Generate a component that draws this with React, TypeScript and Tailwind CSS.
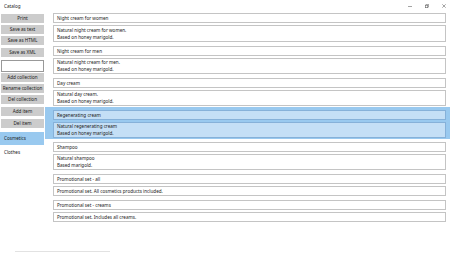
import React from 'react';

type Product = { name: string; desc: string[] };

const products: Product[] = [
  { name: 'Night cream for women', desc: ['Natural night cream for women.', 'Based on honey marigold.'] },
  { name: 'Night cream for men', desc: ['Natural night cream for men.', 'Based on honey marigold.'] },
  { name: 'Day cream', desc: ['Natural day cream.', 'Based on honey marigold.'] },
  { name: 'Regenerating cream', desc: ['Natural regenerating cream', 'Based on honey marigold.'] },
  { name: 'Shampoo', desc: ['Natural shampoo', 'Based marigold.'] },
  { name: 'Promotional set - all', desc: ['Promotional set. All cosmetics products included.'] },
  { name: 'Promotional set - creams', desc: ['Promotional set. Includes all creams.'] },
];

const SELECTED = 3;

function SideButton({ label, className = '' }: { label: string; className?: string }) {
  return (
    <div
      className={
        'flex h-[9px] w-[43px] items-center justify-center whitespace-nowrap bg-[#cccccc] text-[4.6px] leading-none text-[#1a1a1a] ' +
        className
      }
    >
      {label}
    </div>
  );
}

function ProductRow({ p, selected, first }: { p: Product; selected: boolean; first: boolean }) {
  const box = selected
    ? 'border-[#86b1d9] bg-[#c4dff6]'
    : 'border-[#c4c4c4] bg-white';
  const descH = p.desc.length > 1 ? (first ? 'h-[17px] ' : 'h-[16px] ') : 'h-[10px] ';
  return (
    <div
      className={
        'flex flex-col gap-[2px] pb-[1px] pl-[8px] pr-[4px] ' +
        (first ? 'pt-[2px] ' : 'pt-[3px] ') +
        (selected ? 'bg-[#99c9ef]' : '')
      }
    >
      <div className={'flex h-[10px] items-center whitespace-nowrap border pl-[3px] text-[4.6px] leading-none text-[#1a1a1a] ' + box}>
        {p.name}
      </div>
      <div
        className={
          'flex flex-col justify-center whitespace-nowrap border pl-[3px] text-[4.6px] leading-[7px] text-[#1a1a1a] ' +
          descH +
          box
        }
      >
        {p.desc.map((l) => (
          <span key={l}>{l}</span>
        ))}
      </div>
    </div>
  );
}

export default function App() {
  return (
    <div
      className="relative h-[253px] w-[450px] overflow-hidden bg-white"
      style={{ fontFamily: '"Noto Sans", "Liberation Sans", sans-serif' }}
    >
      {/* Title bar */}
      <div className="flex h-[11px] items-center justify-between pl-[4px] pr-[4px] pt-[1px]">
        <span className="text-[4.6px] leading-none text-[#222]">Catalog</span>
        <div className="flex items-center gap-[13px] text-[#555]">
          <svg width="4" height="4" viewBox="0 0 4 4">
            <path d="M0 2.5h4" stroke="#666" strokeWidth="0.6" />
          </svg>
          <svg width="4" height="4" viewBox="0 0 4 4" fill="none" stroke="#666" strokeWidth="0.6">
            <rect x="0.3" y="1.2" width="2.5" height="2.5" />
            <path d="M1.2 1.2V0.3h2.5v2.5H2.8" />
          </svg>
          <svg width="4" height="4" viewBox="0 0 4 4" fill="none" stroke="#666" strokeWidth="0.6">
            <path d="M0.3 0.3l3.4 3.4M3.7 0.3L0.3 3.7" />
          </svg>
        </div>
      </div>

      <div className="flex">
        {/* Left column */}
        <div className="flex w-[45px] flex-col pl-[1px] pt-[3px]">
          <SideButton label="Print" />
          <SideButton label="Save as text" className="mt-[2px]" />
          <SideButton label="Save as HTML" className="mt-[2px]" />
          <SideButton label="Save as XML" className="mt-[3px]" />
          <div className="mt-[3px] h-[12px] w-[43px] border border-[#999] bg-white" />
          <SideButton label="Add collection" className="mt-[1px]" />
          <SideButton label="Rename collection" className="mt-[2px]" />
          <SideButton label="Del collection" className="mt-[2px]" />
          <SideButton label="Add item" className="mt-[3px]" />
          <SideButton label="Del item" className="mt-[3px]" />
          <div className="ml-[-1px] mt-[4px] flex h-[13px] w-[44px] items-center bg-[#99c9ef] pl-[4px] text-[4.6px] leading-none text-[#1a1a1a]">
            Cosmetics
          </div>
          <div className="flex h-[15px] items-center pl-[3px] text-[4.6px] leading-none text-[#1a1a1a]">
            Clothes
          </div>
        </div>

        {/* Product list */}
        <div className="flex w-[405px] flex-col">
          {products.map((p, i) => (
            <ProductRow key={p.name} p={p} selected={i === SELECTED} first={i === 0} />
          ))}
        </div>
      </div>

      <div className="absolute bottom-[1px] left-[15px] h-px w-[95px] bg-[#e2e2e2]" />
    </div>
  );
}
